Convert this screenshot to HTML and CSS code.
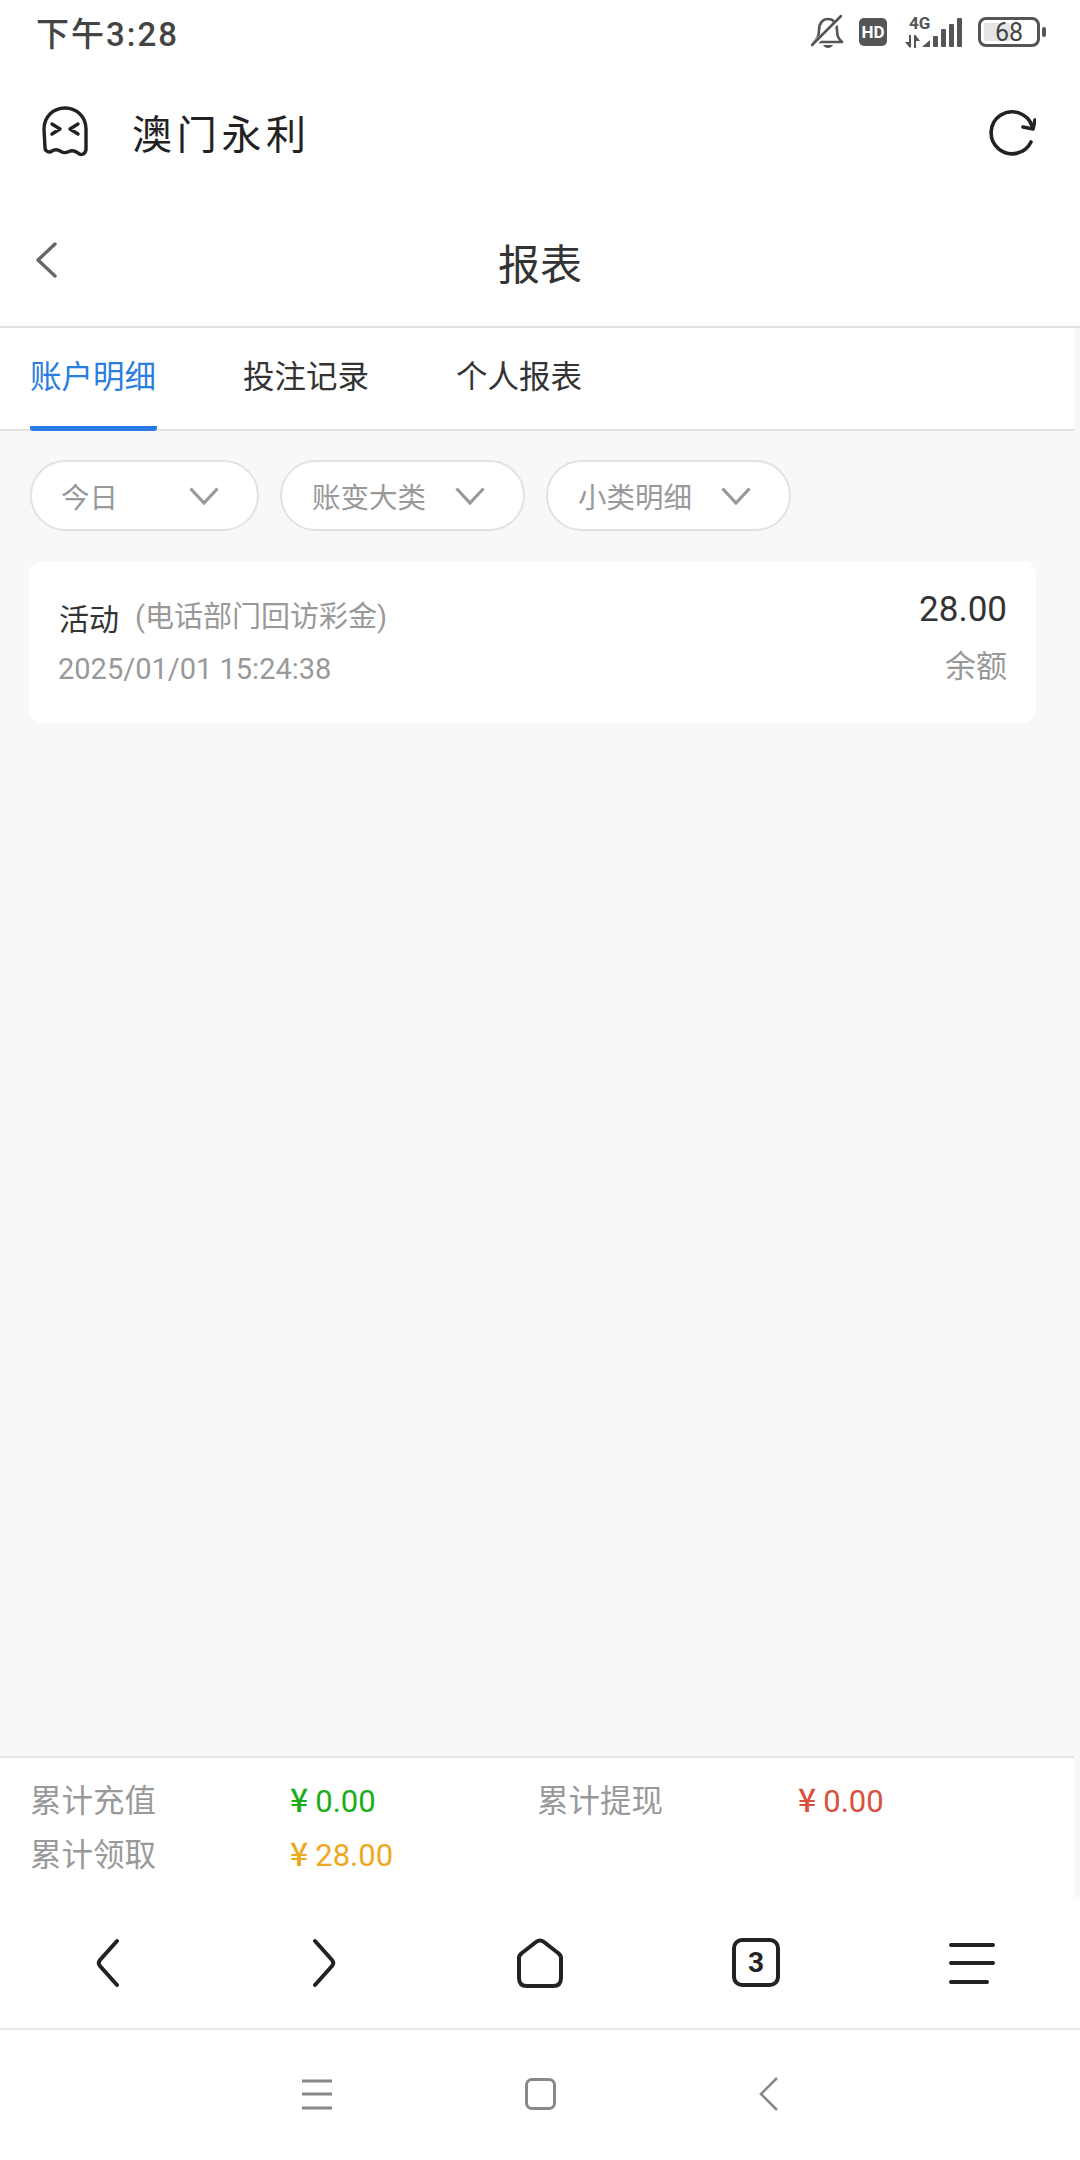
FILE: index.html
```html
<!DOCTYPE html>
<html lang="zh-CN">
<head>
    <meta charset="UTF-8">
    <meta name="viewport" content="width=device-width, initial-scale=1.0">
    <title>报表</title>
    <link rel="stylesheet" href="styles.css">
</head>
<body>
    <div class="phone">
        <div class="status-bar">
            <span class="time">下午3:28</span>
            <div class="status-icons">
                <svg class="bell" width="34" height="34" viewBox="0 0 34 34">
                    <path d="M3 27c3-3 5-5 5-12 0-7 4-11 9-11s9 4 9 11c0 7 2 9 5 12z" fill="none" stroke="#555" stroke-width="2.6" stroke-linejoin="round"/>
                    <path d="M12 30h10c-1 2-3 3-5 3s-4-1-5-3z" fill="#555"/>
                    <path d="M2 30L31 2" stroke="#fff" stroke-width="5"/>
                    <path d="M1 30L30 1" stroke="#555" stroke-width="2.6" stroke-linecap="round"/>
                </svg>
                <span class="hd">HD</span>
                <svg class="net" width="60" height="40" viewBox="0 -9 60 40">
                    <text x="5" y="11.500" class="net-label">4G</text>
                    <path d="M5 18h2v12.500h-1.500L1 25h4z" fill="#555"/>
                    <path d="M10 18h1.500L16 24h-4v7h-2z" fill="#555"/>
                    <path d="M18 30l8-7v7z" fill="#555"/>
                    <rect x="29" y="19" width="5" height="11" rx="1" fill="#555"/>
                    <rect x="37" y="12" width="5" height="18" rx="1" fill="#555"/>
                    <rect x="45" y="7" width="5" height="23" rx="1" fill="#555"/>
                    <rect x="53" y="1" width="5" height="29" rx="1" fill="#555"/>
                </svg>
                <div class="battery">
                    <div class="battery-body">
                        <div class="battery-fill"></div>
                        <span class="battery-num">68</span>
                    </div>
                    <div class="battery-nub"></div>
                </div>
            </div>
        </div>

        <div class="app-bar">
            <svg class="ghost" width="46" height="51" viewBox="0 0 46 51">
                <path d="M2 23C2 11 11 2 23 2s21 9 21 21v20c0 5-5 7-8 4-3-2-6-3-9-1.500s-5 2-8 0-6-2.500-9-.5-7 .5-7-3.500z" fill="none" stroke="#222" stroke-width="3.4" stroke-linejoin="round"/>
                <path d="M10 18l8 5-8 5M36 18l-8 5 8 5" fill="none" stroke="#222" stroke-width="3.4" stroke-linecap="round" stroke-linejoin="round"/>
            </svg>
            <span class="app-title">澳门永利</span>
            <svg class="refresh" width="50" height="50" viewBox="0 0 50 50">
                <path d="M45 34A21 21 0 1 1 46 18" fill="none" stroke="#222" stroke-width="3.6" stroke-linecap="round"/>
                <path d="M37 19l10 2 2-9" fill="none" stroke="#222" stroke-width="3.6" stroke-linecap="round" stroke-linejoin="round"/>
            </svg>
        </div>

        <div class="page-head">
            <svg class="head-back" width="22" height="36" viewBox="0 0 22 36">
                <path d="M20 2L3 18l17 16" fill="none" stroke="#666" stroke-width="3.4" stroke-linecap="round" stroke-linejoin="round"/>
            </svg>
            <h1>报表</h1>
        </div>

        <div class="main">
            <div class="tabs">
                <div class="tab active">账户明细</div>
                <div class="tab">投注记录</div>
                <div class="tab">个人报表</div>
            </div>

            <div class="filters">
                <div class="pill pill-wide">
                    <span>今日</span>
                    <svg width="30" height="18" viewBox="0 0 30 18"><path d="M1.500 1.500L15 16 28.500 1.500" fill="none" stroke="#999" stroke-width="3.2"/></svg>
                </div>
                <div class="pill">
                    <span>账变大类</span>
                    <svg width="30" height="18" viewBox="0 0 30 18"><path d="M1.500 1.500L15 16 28.500 1.500" fill="none" stroke="#999" stroke-width="3.2"/></svg>
                </div>
                <div class="pill">
                    <span>小类明细</span>
                    <svg width="30" height="18" viewBox="0 0 30 18"><path d="M1.500 1.500L15 16 28.500 1.500" fill="none" stroke="#999" stroke-width="3.2"/></svg>
                </div>
            </div>

            <div class="card">
                <div class="card-left">
                    <div class="card-title">活动<span class="card-sub">(电话部门回访彩金)</span></div>
                    <div class="card-date">2025/01/01 15:24:38</div>
                </div>
                <div class="card-right">
                    <div class="card-amount">28.00</div>
                    <div class="card-label">余额</div>
                </div>
            </div>

            <div class="summary">
                <span class="sum-label">累计充值</span>
                <span class="sum-value green"><i>¥</i>0.00</span>
                <span class="sum-label">累计提现</span>
                <span class="sum-value red"><i>¥</i>0.00</span>
                <span class="sum-label">累计领取</span>
                <span class="sum-value orange"><i>¥</i>28.00</span>
            </div>
        </div>

        <div class="toolbar">
            <svg width="24" height="50" viewBox="0 0 24 50"><path d="M21 3L4 22q-2.500 3 0 6l17 19" fill="none" stroke="#222" stroke-width="4" stroke-linecap="round"/></svg>
            <svg width="24" height="50" viewBox="0 0 24 50"><path d="M3 3l17 19q2.500 3 0 6L3 47" fill="none" stroke="#222" stroke-width="4" stroke-linecap="round"/></svg>
            <svg width="48" height="50" viewBox="0 0 48 50"><path d="M3 20q0-3 3-5L20 4q4-3 8 0l14 11q3 2 3 5v20q0 8-8 8H11q-8 0-8-8z" fill="none" stroke="#222" stroke-width="4"/></svg>
            <div class="tab-count">3</div>
            <svg width="46" height="44" viewBox="0 0 46 44"><path d="M2 4h42M2 22h42M2 41h36" fill="none" stroke="#222" stroke-width="4" stroke-linecap="round"/></svg>
        </div>

        <div class="nav-bar">
            <svg width="32" height="32" viewBox="0 0 32 32"><path d="M1 3h30M1 16h30M1 30h30" stroke="#888" stroke-width="3"/></svg>
            <div class="nav-square"></div>
            <svg width="20" height="34" viewBox="0 0 20 34"><path d="M18 1L2 17l16 16" fill="none" stroke="#888" stroke-width="2.600"/></svg>
        </div>
    </div>
</body>
</html>
```

FILE: styles.css
```css
* {
    box-sizing: border-box;
}
body {
    margin: 0;
    font-family: Roboto, "Noto Sans CJK SC", sans-serif;
    color: #333;
    background-color: #fff;
}
.phone {
    display: flex;
    flex-direction: column;
    width: 1080px;
    height: 2160px;
    overflow: hidden;
}

/* status bar */
.status-bar {
    display: flex;
    align-items: center;
    justify-content: space-between;
    height: 64px;
    padding: 0 34px 0 36px;
    flex-shrink: 0;
}
.time {
    font-size: 33px;
    font-weight: 500;
    letter-spacing: 2px;
    color: #444;
}
.status-icons {
    display: flex;
    align-items: center;
}
.hd {
    display: flex;
    align-items: center;
    justify-content: center;
    width: 28px;
    height: 28px;
    margin-left: 14px;
    border-radius: 5px;
    background-color: #555;
    color: #fff;
    font-size: 17px;
    font-weight: 700;
}
.net {
    margin: -9px 0 0 17px;
}
.net-label {
    font-family: Roboto, sans-serif;
    font-size: 17px;
    font-weight: 700;
    fill: #555;
}
.battery {
    display: flex;
    align-items: center;
    margin-left: 14px;
}
.battery-body {
    position: relative;
    display: flex;
    align-items: center;
    justify-content: center;
    width: 62px;
    height: 30px;
    border: 3.5px solid #555;
    border-radius: 8px;
}
.battery-fill {
    position: absolute;
    left: 3px;
    top: 3px;
    bottom: 3px;
    width: 26px;
    background-color: #e6e6e6;
}
.battery-num {
    position: relative;
    font-size: 25px;
    line-height: 1;
    color: #444;
}
.battery-nub {
    width: 4px;
    height: 10px;
    margin-left: 2px;
    border-radius: 2px;
    background-color: #555;
}

/* app bar */
.app-bar {
    display: flex;
    align-items: center;
    height: 137px;
    padding: 0 44px 0 42px;
    flex-shrink: 0;
}
.ghost {
    margin-top: -2px;
}
.app-title {
    margin: -2px 0 0 44px;
    font-size: 40px;
    letter-spacing: 4.7px;
    color: #222;
}
.refresh {
    margin-left: auto;
}

/* page header */
.page-head {
    position: relative;
    display: flex;
    align-items: center;
    justify-content: center;
    height: 127px;
    padding-bottom: 5px;
    border-bottom: 2px solid #e3e3e3;
    flex-shrink: 0;
}
.page-head h1 {
    margin: 0;
    font-size: 42px;
    font-weight: 400;
    color: #333;
}
.head-back {
    position: absolute;
    left: 35px;
    top: 41px;
}

/* main area */
.main {
    display: flex;
    flex-direction: column;
    flex: 1;
    padding-right: 6px;
    background-color: #f8f8f8;
}
.tabs {
    display: flex;
    gap: 86px;
    height: 103px;
    padding-left: 30px;
    background-color: #fff;
    border-bottom: 2px solid #e3e3e3;
}
.tab {
    width: 127px;
    height: 103px;
    padding-top: 30px;
    font-size: 31.5px;
    line-height: 40px;
    color: #333;
    white-space: nowrap;
}
.tab.active {
    color: #2a7de1;
    border-bottom: 5px solid #2979e8;
    border-radius: 0 0 3px 3px;
}
.filters {
    display: flex;
    gap: 21px;
    margin: 29px 0 0 30px;
}
.pill {
    display: flex;
    align-items: center;
    justify-content: space-between;
    gap: 29px;
    height: 71px;
    padding: 0 38px 0 30px;
    border: 2px solid #e2e2e2;
    border-radius: 36px;
    background-color: #fff;
    font-size: 28.5px;
    color: #999;
}
.pill-wide {
    width: 229px;
    padding-left: 29px;
}
.card {
    display: flex;
    justify-content: space-between;
    height: 162px;
    margin: 30px 38px 0 29px;
    padding: 0 29px 0 30px;
    border-radius: 14px;
    background-color: #fff;
}
.card-left {
    padding-top: 37px;
}
.card-title {
    font-size: 30px;
    line-height: 44px;
    color: #333;
}
.card-sub {
    position: relative;
    top: -3px;
    margin-left: 16px;
    font-size: 29px;
    color: #999;
}
.card-date {
    margin: 9px 0 0 -1px;
    font-size: 29px;
    line-height: 36px;
    color: #999;
}
.card-right {
    padding-top: 27px;
    text-align: right;
}
.card-amount {
    font-size: 35px;
    line-height: 44px;
    color: #333;
}
.card-label {
    margin-top: 15px;
    font-size: 31px;
    line-height: 40px;
    color: #999;
}
.summary {
    display: grid;
    grid-template-columns: 260px 247px 261px 1fr;
    grid-auto-rows: 54px;
    align-items: center;
    height: 141px;
    margin-top: auto;
    padding: 13px 0 0 30px;
    background-color: #fff;
    border-top: 2px solid #e3e3e3;
}
.sum-label {
    font-size: 31.5px;
    color: #999;
}
.sum-value {
    font-size: 31px;
}
.sum-value i {
    margin-right: 7px;
    font-size: 32px;
    font-style: normal;
    font-weight: 500;
    font-family: "Noto Sans CJK SC", sans-serif;
}
.green {
    color: #1aad19;
}
.red {
    color: #d9503f;
}
.orange {
    color: #eea820;
}

/* bottom bars */
.toolbar {
    display: grid;
    grid-template-columns: repeat(5, 216px);
    justify-items: center;
    align-items: center;
    height: 133px;
    flex-shrink: 0;
    border-bottom: 2px solid #e8e8e8;
}
.tab-count {
    display: flex;
    align-items: center;
    justify-content: center;
    width: 48px;
    height: 49px;
    border: 4px solid #222;
    border-radius: 10px;
    font-size: 28px;
    font-weight: 700;
    color: #222;
}
.nav-bar {
    display: grid;
    grid-template-columns: 222px 224px 234px;
    justify-content: center;
    justify-items: center;
    align-items: center;
    height: 130px;
    flex-shrink: 0;
    padding: 0 0 2px 12px;
}
.nav-square {
    width: 31px;
    height: 32px;
    border: 3.4px solid #888;
    border-radius: 7px;
}
```
